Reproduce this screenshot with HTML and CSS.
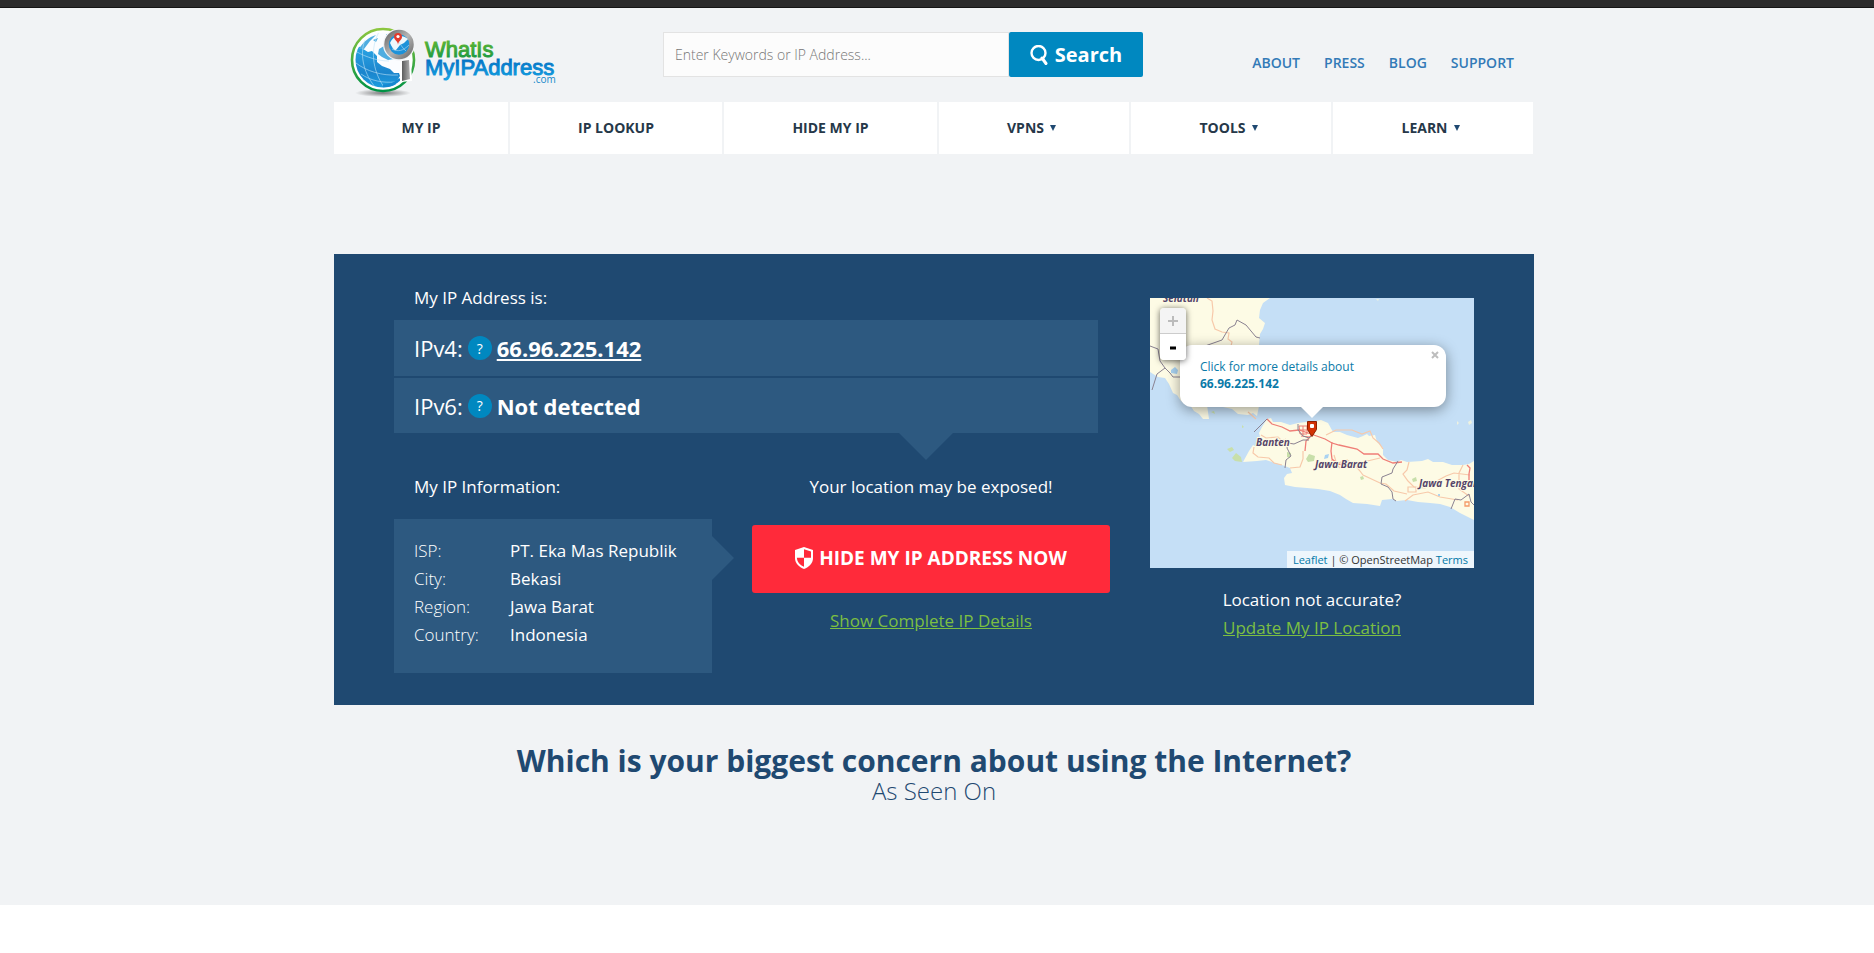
FILE: index.html
```html
<!DOCTYPE html>
<html lang="en">
<head>
<meta charset="utf-8">
<title>What Is My IP Address</title>
<meta name="viewport" content="width=device-width, initial-scale=1">
<link rel="stylesheet" href="styles.css">
</head>
<body>
<div class="topbar"></div>
<div class="page">
  <div class="container">
    <header class="header">
      <a class="logo" href="#" aria-label="WhatIsMyIPAddress.com home">
        <svg class="logo-art" viewBox="0 0 215 80" width="215" height="80">
          <defs>
            <linearGradient id="ring" x1="0" y1="0" x2="0" y2="1"><stop offset="0" stop-color="#8cc63f"/><stop offset="1" stop-color="#009245"/></linearGradient>
            <linearGradient id="sea" x1="0" y1="0" x2="0" y2="1"><stop offset="0" stop-color="#29a4e4"/><stop offset=".5" stop-color="#1b85cd"/><stop offset="1" stop-color="#1daceb"/></linearGradient>
            <linearGradient id="metal" x1="0" y1="0" x2="1" y2="1"><stop offset="0" stop-color="#6b6b6b"/><stop offset=".5" stop-color="#b5b5b5"/><stop offset="1" stop-color="#6f6f6f"/></linearGradient>
            <linearGradient id="handle" x1="0" y1="0" x2="1" y2="0"><stop offset="0" stop-color="#5c5c5c"/><stop offset="1" stop-color="#b0b0b0"/></linearGradient>
            <linearGradient id="leaf" x1="0" y1="0" x2="0" y2="1"><stop offset="0" stop-color="#6cbb2e"/><stop offset="1" stop-color="#0d9347"/></linearGradient>
            <linearGradient id="blue" x1="0" y1="0" x2="0" y2="1"><stop offset="0" stop-color="#0068bd"/><stop offset="1" stop-color="#15a2e2"/></linearGradient>
            <radialGradient id="shade"><stop offset="0" stop-color="#000" stop-opacity=".5"/><stop offset="1" stop-color="#000" stop-opacity="0"/></radialGradient>
            <clipPath id="disc"><circle cx="38" cy="40" r="27.500"/></clipPath>
          </defs>
          <ellipse cx="38" cy="73" rx="28" ry="4" fill="url(#shade)"/>
          <circle cx="38" cy="40" r="31" fill="#fff" stroke="url(#ring)" stroke-width="2.600"/>
          <g clip-path="url(#disc)">
            <rect x="10" y="11" width="56" height="58" fill="#fbfdff"/>
            <path d="M9 32C12 27 15 25 18 29l5 3 4-1 5 5 0 6 5 4 8 3 4 4 5 0 1 3-4 6 0 8-6 6-14 2C16 68 8 50 9 32z" fill="url(#sea)"/>
            <path d="M14 29c4-7 10-12 17-14l-6 6-6 8zM34 29l5-3 4 3-2 4 5 1 3 5-6 1-6-3-4-3zM41 14l5 1-3 4zM28 20l5-2-2 4z" fill="#4fadE0"/>
            <g fill="none" stroke="#bfe4f8" stroke-width=".6"><path d="M20 20c-5 12-3 31 10 47M34 12c-9 16-7 38 5 55M11 43c10 8 26 13 42 12M16 54c10 7 22 9 34 8M12 32c9 5 21 9 32 9"/></g>
          </g>
          <path d="M38 66c8 0 13-3 17-7" stroke="#1788d0" stroke-width="2.500" fill="none"/>
          <path d="M55 39l11 0 1 22-12 1z" fill="#fff"/>
          <path d="M57 41l7-1 1 19-8 2z" fill="url(#handle)"/>
          <circle cx="54" cy="24.500" r="16" fill="#f1f3f5"/>
          <circle cx="54" cy="24.500" r="12.500" fill="#1d92d9" stroke="url(#metal)" stroke-width="4.500"/>
          <path d="M45 23c3-8 12-9 18-4l-4 4-4 2-4 5c-2 1-4-3-6-7z" fill="#edf7fc"/>
          <path d="M47 29c6 3 11 2 17-4M51 17c3 5 6 11 10 14" stroke="#b8def2" stroke-width=".6" fill="none"/>
          <path d="M53 25c0-4-4-5-4-8a4 4 0 0 1 8 0c0 3-4 4-4 8z" fill="#e23a2d"/><circle cx="53" cy="16.500" r="1.600" fill="#fff"/>
          <text class="logo-word logo-green" x="80" y="37">WhatIs</text>
          <text class="logo-word logo-blue" x="80" y="55">MyIPAddress</text>
          <text class="logo-com" x="188" y="63">.com</text>
        </svg>
      </a>
      <form class="search" role="search">
        <input class="search-input" type="text" aria-label="Search" placeholder="Enter Keywords or IP Address...">
        <button class="search-button" type="button">
          <svg viewBox="0 0 18 20" width="18" height="20"><circle cx="8.500" cy="8" r="7" fill="none" stroke="#fff" stroke-width="2.400"/><path d="M12 13l4 5.500" stroke="#fff" stroke-width="3" stroke-linecap="round"/></svg>
          Search
        </button>
      </form>
      <nav class="links" aria-label="Site">
        <a href="#">ABOUT</a><a href="#">PRESS</a><a href="#">BLOG</a><a href="#">SUPPORT</a>
      </nav>
    </header>

    <nav class="menu" aria-label="Main">
      <a href="#">MY IP</a>
      <a href="#">IP LOOKUP</a>
      <a href="#">HIDE MY IP</a>
      <a class="has-menu" href="#">VPNS</a>
      <a class="has-menu" href="#">TOOLS</a>
      <a class="has-menu" href="#">LEARN</a>
    </nav>

    <main>
      <section class="panel">
        <div class="details">
          <p class="label">My IP Address is:</p>
          <div class="addresses">
            <div class="address"><span>IPv4:</span><button class="help" type="button" aria-label="About IPv4">?</button><a href="#">66.96.225.142</a></div>
            <div class="address"><span>IPv6:</span><button class="help" type="button" aria-label="About IPv6">?</button><strong>Not detected</strong></div>
          </div>
          <div class="lower">
            <div>
              <p class="label">My IP Information:</p>
              <dl class="info">
                <dt>ISP:</dt><dd>PT. Eka Mas Republik</dd>
                <dt>City:</dt><dd>Bekasi</dd>
                <dt>Region:</dt><dd>Jawa Barat</dd>
                <dt>Country:</dt><dd>Indonesia</dd>
              </dl>
            </div>
            <div class="action">
              <p>Your location may be exposed!</p>
              <button class="hide" type="button">
                <svg viewBox="0 0 18 22" width="18" height="22"><path d="M9 0L0 3v8c0 5.500 4 9 9 11 5-2 9-5.500 9-11V3z" fill="#fff"/><path d="M9 2.200v8.600h7V4.500zM9 10.800H1.900c.2 4.200 3.100 7.300 7.100 9z" fill="#ff2a3a"/></svg>
                HIDE MY IP ADDRESS NOW
              </button>
              <a class="green" href="#">Show Complete IP Details</a>
            </div>
          </div>
        </div>

        <aside class="location">
          <div class="map">
            <svg class="map-art" viewBox="0 0 324 270" preserveAspectRatio="xMidYMid slice">
              <rect width="324" height="270" fill="#c5dff6"/>
              <path fill="#fdfbe5" d="M0 0H120L113 5 110 12 109 20 115 25 113 31 110 36 109 47V108L107 118 103 115 98 117 88 116 82 111 73 109 65 101 57 107 59 121H53L49 116 44 113 40 107 31 103 27 97 23 95 19 86 15 80 8 79 0 74z"/>
              <path fill="#fdfbe5" d="M93 164L99 153 103 147 107 149 111 143 109 135 112 129 117 121 121 120 123 124 131 124 140 127 148 125 156 124 163 124 171 122 178 125 183 134 190 134 197 137 208 140 213 138 217 136 219 138 225 137 227 144 233 150 233 157 238 162 247 164 251 162 257 164 272 163 278 161 283 164 293 164 302 167 313 167 319 166 324 163V222L310 215 300 209 290 206 280 205 268 204 257 202 247 203 242 201 232 202 230 208 217 206 203 205 196 201 190 197 180 193 168 191 157 190 145 189 135 187 134 180 137 176 142 175 140 170 132 167 125 165 116 162 107 163z"/>
              <g fill="#c8dfaa"><path d="M82 160l4-5 5 4 1 5-7-1zM77 151l5-2 2 3-4 2zM156 161l3-5 6 2-1 5-6 1zM262 181l4-2 1 4-4 1zM210 179l3-1 1 3-3 1zM137 154l4 1-1 5-3-1zM61 114l3-1 1 3zM92 127l2 2-2 1zM96 171h3M107 169h3"/></g>
              <g fill="#a9d3f2"><path d="M175 157l4-1-1 4-4 1zM21 72l4-3 3 3-1 4-6-1zM288 196h2v2h-2z"/></g>
              <g fill="#eef2e0"><path d="M307 123l2 2-2 2zM318 124l3-2 1 3-3 2zM226 1l3 0-1 2z"/></g>
              <g fill="none" stroke="#f7c9aa" stroke-width="1.200">
                <path d="M57 0l5 3 1 10-1 9 3 9 7 3 7 1-1 6 4 3-1 4M104 149l-1 6 5 4 11 1 5 5 8 2M111 137l5 3 12-1 4 4 4-2M176 137l10-5 16 0 10 4 8-3 3 7 6 5 4 6M181 162l7 3 9-3 8 5 5 6 3 4 17 8 6 1 8 7 13 3M205 166l25-6M259 164l-2 8-4 4 5 7 6 6 11 1 8-5 13-7 8-3 16 2M255 203l8-6 15-3 12 5 18 3M313 167l-4 8 0 16 10 7M98 114l8 7"/>
                <path d="M153 153l0 8-3 8-10 1M258 189h8v5h-8zM184 157l3 10 3 3"/>
              </g>
              <g fill="none" stroke="#ef7e77" stroke-width="1.300">
                <path d="M117 121l5 5 10 3 8 4 9-1 12 4 14 5 7 4 7 2 18 4 7 5h14l5 5 10 4 9-1M182 144l-1 9 1 8 6 5M163 136l-7 7-1 10"/>
                <path d="M149 128h8v8h-7zM153 128v9M149 132h13M157 127l5 7-2 5-9-1" stroke-width="1"/>
                <path d="M317 167l3 3-1 6 0 10M187 166l8 1"/>
                <path d="M315 204h4v4h-4z" stroke="#f49b68"/>
              </g>
              <g fill="none" stroke="#8a8291" stroke-width="1">
                <path d="M55 48l17-6 7-12 6-3 2-5 9 5 10 12 4 1M0 48l8 3 2 12 5 7-8 6-5 16M15 70l5 5 3 4h8M104 134l13-13M148 126v6l5 6 6 2 3-3M135 170l1-8 5-4-4-8 1-5 6 1 9-4 6 0M248 163l-5 8-1 4-10 4-1 7 7 3 4 5 1 7 3 2M301 211l4-10 6 1 8-6 2 8 3 3"/>
              </g>
              <g class="place-names">
                <text x="13" y="4">Selatan</text>
                <text x="106" y="148">Banten</text>
                <text x="165" y="170">Jawa Barat</text>
                <text x="269" y="189">Jawa Tengah</text>
              </g>
              <path d="M157.500 123.500h9v8l-4.500 7-4.500-7z" fill="#d33205" stroke="#8f2000" stroke-linejoin="round"/><rect x="160" y="126" width="4" height="4" rx="1" fill="#fff"/>
            </svg>
            <div class="popup">
              <a href="#">Click for more details about <b>66.96.225.142</b></a>
              <button class="close" type="button" aria-label="Close popup"><svg viewBox="0 0 8 8" width="8" height="8"><path d="M1 1l6 6M7 1L1 7" stroke="#bdbdbd" stroke-width="2"/></svg></button>
            </div>
            <div class="zoom">
              <button type="button" aria-label="Zoom in" disabled><svg viewBox="0 0 10 10" width="10" height="10"><path d="M5 0v10M0 5h10" stroke="#bbb" stroke-width="2"/></svg></button>
              <button type="button" aria-label="Zoom out"><svg viewBox="0 0 10 10" width="10" height="10"><path d="M2 6h6" stroke="#000" stroke-width="3"/></svg></button>
            </div>
            <div class="credit"><a href="#">Leaflet</a> | © OpenStreetMap <a href="#">Terms</a></div>
          </div>
          <p class="accuracy">Location not accurate?<br><a class="green" href="#">Update My IP Location</a></p>
        </aside>
      </section>
      <h1 class="question">Which is your biggest concern about using the Internet?</h1>
      <h2 class="seen">As Seen On</h2>
    </main>
  </div>
</div>
</body>
</html>
```
FILE: styles.css
```css
* { box-sizing: border-box; }
body {
  margin: 0;
  background: #fff;
  color: #fff;
  font: 17px/28px "Open Sans", "Noto Sans", sans-serif;
}
p, h1, h2, dl, dd { margin: 0; }
button { border: 0; padding: 0; font-family: inherit; cursor: pointer; }

.topbar { height: 8px; background: #2c2c2c; border-bottom: 1px solid #151515; }
.page { background: #f1f3f5; padding: 0 6px 104px 0; }
.container { max-width: 1200px; margin: 0 auto; }

.header { display: grid; grid-template-columns: 329fr 480fr 391fr; height: 94px; }
.logo { padding: 12px 0 0 11px; }
.logo-art { display: block; }
.logo-word { font: 22px "Liberation Sans", Arial, sans-serif; stroke-width: 1px; }
.logo-green { fill: url(#leaf); stroke: url(#leaf); }
.logo-blue { fill: url(#blue); stroke: url(#blue); }
.logo-com { font: 10px "Open Sans", sans-serif; fill: #1488ca; }

.search { display: flex; height: 45px; margin-top: 24px; }
.search-input {
  flex: 1;
  min-width: 0;
  padding: 0 11px;
  border: 1px solid #e3e3e3;
  background: #fcfcfc;
  color: #333;
  font: 300 14px "Open Sans", sans-serif;
}
.search-input::placeholder { color: #777; opacity: 1; }
.search-button {
  display: flex;
  align-items: center;
  justify-content: center;
  gap: 7px;
  width: 134px;
  border-radius: 2px;
  background: #0088c0;
  color: #fff;
  font-size: 20px;
  font-weight: 700;
}

.links {
  display: flex;
  justify-content: flex-end;
  gap: 24px;
  padding: 41px 20px 0 0;
  font-size: 14px;
  font-weight: 600;
}
.links a { color: #337ab7; text-decoration: none; }

.menu {
  display: grid;
  grid-template-columns: 174fr 212fr 213fr 190fr 200fr 200fr;
  gap: 2px;
  padding-right: 1px;
  margin-bottom: 100px;
}
.menu a {
  display: flex;
  align-items: center;
  justify-content: center;
  height: 52px;
  background: #fff;
  color: #263849;
  font-size: 14px;
  font-weight: 700;
  text-decoration: none;
}
.menu .has-menu { padding-right: 5px; }
.has-menu::after {
  content: "";
  margin-left: 6px;
  border: 3px solid transparent;
  border-top: 6px solid #1f4971;
  border-bottom: 0;
}

.panel {
  display: grid;
  grid-template-columns: 716fr 324fr;
  gap: 40px;
  padding: 30px 60px 32px;
  background: #1f4971;
}
.label { padding-left: 20px; }
.addresses {
  position: relative;
  display: grid;
  gap: 2px;
  margin: 8px 12px 40px 0;
}
.addresses::after {
  content: "";
  position: absolute;
  top: 100%;
  right: 145px;
  border: 27px solid transparent;
  border-top-color: #2d5980;
  border-bottom: 0;
}
.address {
  display: flex;
  align-items: center;
  gap: 5px;
  height: 56px;
  padding: 0 20px;
  background: #2d5980;
  font-size: 22px;
}
.address:last-child { height: 55px; }
.address a, .address strong { color: #fff; font-weight: 700; }
.help {
  width: 24px;
  height: 24px;
  border-radius: 50%;
  background: #0088c0;
  color: #fff;
  font-size: 14px;
}

.lower { display: grid; grid-template-columns: 318fr 358fr; gap: 40px; }
.info {
  position: relative;
  display: grid;
  grid-template-columns: 96px 1fr;
  align-content: start;
  margin-top: 18px;
  padding: 18px 20px 24px;
  background: #2d5980;
}
.info::after {
  content: "";
  position: absolute;
  top: 17px;
  left: 100%;
  border: 22px solid transparent;
  border-left-color: #2d5980;
  border-right: 0;
}
.info dt { font-weight: 300; }
.action { text-align: center; }
.hide {
  display: flex;
  align-items: center;
  justify-content: center;
  gap: 6px;
  width: 100%;
  height: 68px;
  margin: 24px 0 14px;
  padding-bottom: 2px;
  border-radius: 3px;
  background: #ff2a3a;
  color: #fff;
  font-size: 19px;
  font-weight: 700;
}
.green { color: #7cbf42; }

.location { padding-top: 14px; }
.map { position: relative; height: 270px; overflow: hidden; font-size: 12px; line-height: 17px; }
.map-art { display: block; width: 100%; height: 100%; }
.place-names text {
  font: italic 700 10px "Open Sans", sans-serif;
  fill: #554469;
  stroke: #fdfbe5;
  stroke-width: 2px;
  paint-order: stroke;
}
.popup {
  position: absolute;
  left: 30px;
  top: 47px;
  width: 266px;
  padding: 13px 20px 15px;
  border-radius: 12px;
  background: #fff;
  box-shadow: 0 3px 14px rgba(0, 0, 0, .4);
}
.popup::after {
  content: "";
  position: absolute;
  top: 100%;
  left: 121px;
  border: 11px solid transparent;
  border-top-color: #fff;
  border-bottom: 0;
}
.popup a { display: block; color: #0a7aa8; text-decoration: none; }
.popup b { display: block; }
.close { position: absolute; top: 6px; right: 7px; display: flex; background: none; }
.zoom {
  position: absolute;
  left: 10px;
  top: 10px;
  width: 26px;
  border-radius: 4px;
  overflow: hidden;
  box-shadow: 0 1px 6px rgba(0, 0, 0, .6);
}
.zoom button {
  display: flex;
  align-items: center;
  justify-content: center;
  width: 26px;
  height: 26px;
  background: #fff;
}
.zoom button:disabled { background: #f4f4f4; border-bottom: 1px solid #ccc; }
.credit {
  position: absolute;
  right: 0;
  bottom: 0;
  padding: 0 6px;
  background: rgba(255, 255, 255, .7);
  color: #333;
  font-size: 11px;
}
.credit a { color: #0078a8; text-decoration: none; }
.accuracy { margin-top: 18px; text-align: center; }

.question {
  margin-top: 36px;
  color: #1f4971;
  font-size: 30px;
  line-height: 40px;
  font-weight: 700;
  text-align: center;
}
.seen {
  color: #1f4971;
  font-size: 24px;
  line-height: 20px;
  font-weight: 300;
  text-align: center;
}
```
